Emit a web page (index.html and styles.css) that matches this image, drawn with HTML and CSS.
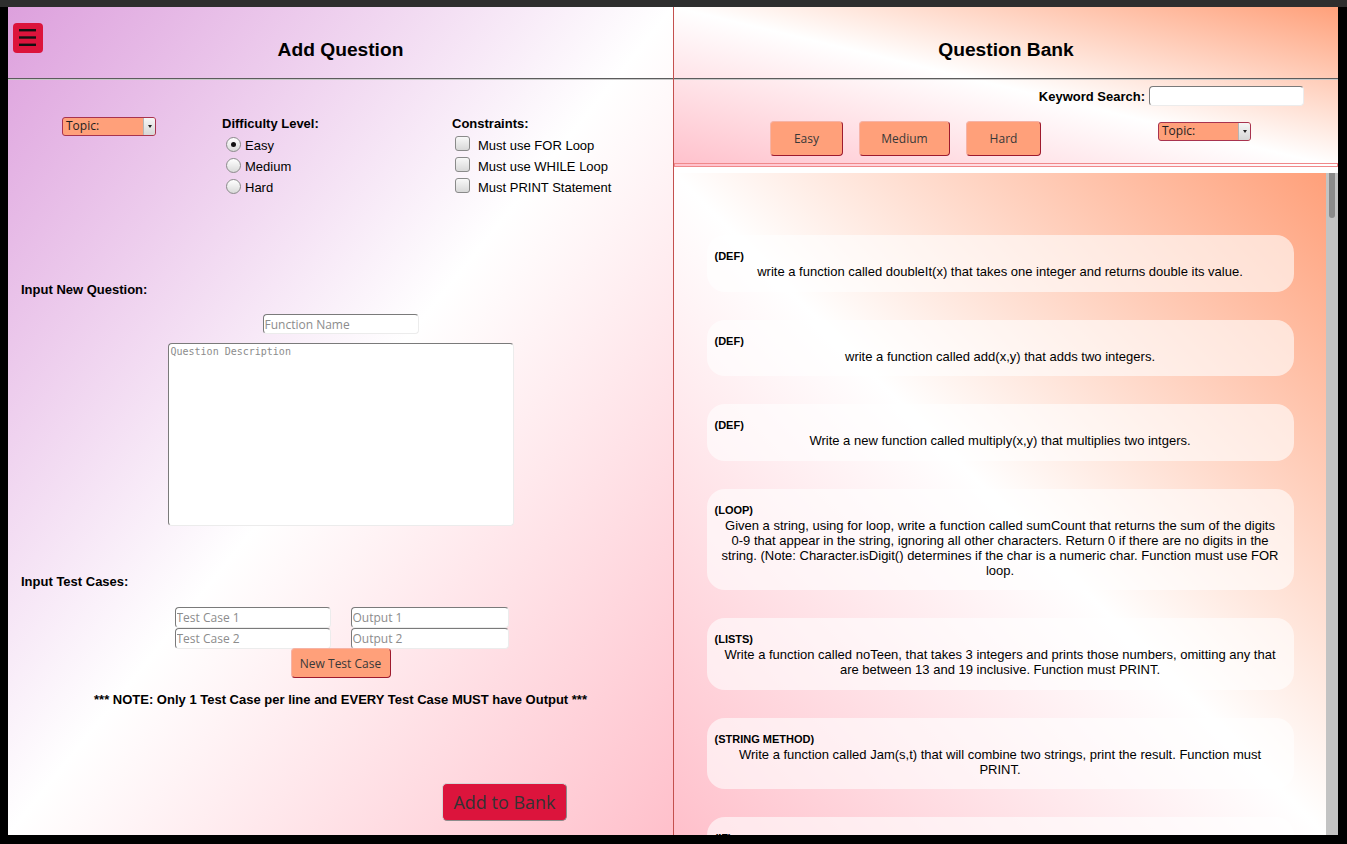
FILE: index.html
```html
<!DOCTYPE html>
<html lang="en">
<head>
<meta charset="utf-8">
<title>Question Bank</title>
<link rel="stylesheet" href="styles.css">
</head>
<body>
<div class="titlebar"></div>
<div class="app">
  <section class="panel panel-add">
    <div class="menu-btn" role="button" aria-label="Menu">
      <svg width="30" height="30" viewBox="0 0 30 30">
        <rect x="6" y="6" width="17" height="2.4" fill="#111"/>
        <rect x="6" y="13.3" width="17" height="2.4" fill="#111"/>
        <rect x="6" y="20.6" width="17" height="2.4" fill="#111"/>
      </svg>
    </div>
    <header class="panel-head"><h2>Add Question</h2></header>
    <div class="add-body">
      <div class="opts">
        <div class="opt-topic">
          <div class="select"><span class="select-text">Topic:</span><span class="select-arrow"></span></div>
        </div>
        <div class="opt-diff">
          <div class="opt-title">Difficulty Level:</div>
          <div class="opt-list">
            <div class="opt-row"><span class="radio checked"></span>Easy</div>
            <div class="opt-row"><span class="radio"></span>Medium</div>
            <div class="opt-row"><span class="radio"></span>Hard</div>
          </div>
        </div>
        <div class="opt-cons">
          <div class="opt-title">Constraints:</div>
          <div class="opt-list">
            <div class="opt-row"><span class="check"></span>Must use FOR Loop</div>
            <div class="opt-row"><span class="check"></span>Must use WHILE Loop</div>
            <div class="opt-row"><span class="check"></span>Must PRINT Statement</div>
          </div>
        </div>
      </div>
      <div class="sec-label sec-q">Input New Question:</div>
      <input class="field fname" placeholder="Function Name">
      <textarea class="field desc" placeholder="Question Description"></textarea>
      <div class="sec-label sec-t">Input Test Cases:</div>
      <div class="tc-grid">
        <input class="field tc" placeholder="Test Case 1">
        <input class="field tc" placeholder="Output 1">
        <input class="field tc" placeholder="Test Case 2">
        <input class="field tc" placeholder="Output 2">
      </div>
      <button class="btn-salmon btn-newtc">New Test Case</button>
      <p class="note">*** NOTE: Only 1 Test Case per line and EVERY Test Case MUST have Output ***</p>
      <button class="btn-add">Add to Bank</button>
    </div>
  </section>
  <div class="divider"></div>
  <section class="panel panel-bank">
    <div class="bank-top">
      <header class="panel-head"><h2>Question Bank</h2></header>
      <div class="bank-controls">
        <div class="kw-row"><span class="kw-label">Keyword Search:</span><input class="field kw"></div>
        <div class="filter-row">
          <button class="btn-salmon fbtn f-easy">Easy</button>
          <button class="btn-salmon fbtn f-med">Medium</button>
          <button class="btn-salmon fbtn f-hard">Hard</button>
          <div class="select select-bank"><span class="select-text">Topic:</span><span class="select-arrow"></span></div>
        </div>
        <div class="dbl-line"></div>
      </div>
    </div>
    <div class="bank-scroll">
      <div class="bank-list">
        <div class="card"><div class="tag">(DEF)</div><div class="qtext">write a function called doubleIt(x) that takes one integer and returns double its value.</div></div>
        <div class="card"><div class="tag">(DEF)</div><div class="qtext">write a function called add(x,y) that adds two integers.</div></div>
        <div class="card"><div class="tag">(DEF)</div><div class="qtext">Write a new function called multiply(x,y) that multiplies two intgers.</div></div>
        <div class="card"><div class="tag">(LOOP)</div><div class="qtext">Given a string, using for loop, write a function called sumCount that returns the sum of the digits 0-9 that appear in the string, ignoring all other characters. Return 0 if there are no digits in the string. (Note: Character.isDigit() determines if the char is a numeric char. Function must use FOR loop.</div></div>
        <div class="card"><div class="tag">(LISTS)</div><div class="qtext">Write a function called noTeen, that takes 3 integers and prints those numbers, omitting any that are between 13 and 19 inclusive. Function must PRINT.</div></div>
        <div class="card"><div class="tag">(STRING METHOD)</div><div class="qtext">Write a function called Jam(s,t) that will combine two strings, print the result. Function must PRINT.</div></div>
        <div class="card"><div class="tag">(IF)</div><div class="qtext">Write a function called isEven(x) that returns True if x is even.</div></div>
      </div>
      <div class="scrollbar"><div class="thumb"></div></div>
    </div>
  </section>
</div>
</body>
</html>
```
FILE: styles.css
```css
* { box-sizing: border-box; }
html, body { margin: 0; padding: 0; }
body {
  width: 1347px;
  height: 844px;
  overflow: hidden;
  background: #000;
  font-family: "Liberation Sans", Arial, sans-serif;
  font-size: 13px;
  color: #000;
}
.titlebar { height: 7px; background: #2e2e2e; }
.app { display: flex; height: 828px; margin: 0 9px 0 8px; }
.panel { position: relative; display: flex; flex-direction: column; }
.panel-add {
  width: 665px;
  background: linear-gradient(to bottom right, #dda0dd, #ffffff, #ffc0cb);
}
.divider { width: 1px; background: #c4504e; flex: none; }
.panel-bank { width: 664px; }

.menu-btn {
  position: absolute;
  left: 5px;
  top: 16px;
  width: 30px;
  height: 30px;
  border-radius: 4px;
  background: #dc143c;
}
.menu-btn svg { display: block; }

.panel-head {
  height: 72px;
  flex: none;
  display: flex;
  justify-content: center;
  padding-top: 32px;
  border-bottom: 1px solid #5c5c5c;
}
.panel-head h2 { margin: 0; font-size: 19.2px; line-height: 22px; font-weight: bold; }

/* ---------- Add question ---------- */
.add-body {
  flex: 1;
  display: flex;
  flex-direction: column;
  border-top: 1px solid #c8c8c8;
}
.opts { display: flex; margin-top: 36px; padding-left: 54px; }
.opt-topic { width: 160px; }
.opt-diff { width: 230px; }
.opt-cons { flex: 1; }
.opt-title { font-weight: bold; line-height: 15px; }
.opt-list { margin-top: 4px; }
.opt-row { display: flex; align-items: center; height: 21px; line-height: 15px; }
.radio {
  flex: none;
  position: relative;
  width: 15px;
  height: 15px;
  margin: -2px 4px 0 4px;
  border: 1px solid #8a8a8a;
  border-radius: 50%;
  background: linear-gradient(#ffffff, #d9d9d9);
}
.radio.checked::after {
  content: "";
  position: absolute;
  left: 4px;
  top: 4px;
  width: 5px;
  height: 5px;
  border-radius: 50%;
  background: #111;
}
.check {
  flex: none;
  width: 15px;
  height: 15px;
  margin: -5px 8px 0 3px;
  border: 1px solid #8a8a8a;
  border-radius: 3px;
  background: linear-gradient(#f8f8f8, #d8d8d8);
}

.select {
  display: flex;
  width: 94px;
  height: 19px;
  margin-top: 1px;
  border: 1px solid #a8334f;
  border-radius: 3px;
  background: #ffa07a;
  overflow: hidden;
  font-family: "Open Sans", sans-serif;
  font-size: 12px;
  color: #1e1e1e;
}
.select-text { flex: 1; padding-left: 3px; line-height: 16px; }
.select-arrow {
  width: 12px;
  display: flex;
  align-items: center;
  justify-content: center;
  border-left: 1px solid #b5b5b5;
  background: linear-gradient(#f6f6f6, #d6d6d6);
}
.select-arrow::after {
  content: "";
  border-top: 3px solid #222;
  border-left: 2.5px solid transparent;
  border-right: 2.5px solid transparent;
}

.sec-label { font-weight: bold; line-height: 15px; padding-left: 13px; }
.sec-q { margin-top: 84px; }
.sec-t { margin-top: 48px; }

.field {
  background: #fff;
  border: 1px solid;
  border-color: #7a7a7a #ececec #ececec #7a7a7a;
  border-radius: 4px;
  font-family: "Open Sans", sans-serif;
  font-size: 12px;
  color: #333;
  padding: 0 1px;
  outline: none;
  margin: 0;
}
.field::placeholder { color: #8c8c8c; }
.fname { align-self: center; width: 156px; height: 20px; margin-top: 17px; }
.desc {
  align-self: center;
  width: 346px;
  height: 183px;
  margin-top: 9px;
  resize: none;
  padding: 2px;
  font-family: "DejaVu Sans Mono", monospace;
  font-size: 10px;
}
.tc-grid {
  display: grid;
  grid-template-columns: 156px 158px;
  grid-auto-rows: 21px;
  column-gap: 20px;
  justify-content: center;
  margin-top: 18px;
  padding-left: 2px;
}
.tc { width: 100%; height: 21px; }

.btn-salmon {
  background: #ffa07a;
  border: 1px solid;
  border-color: #f6b3a6 #9e1a2e #9e1a2e #f6b3a6;
  border-radius: 4px;
  font-family: "Open Sans", sans-serif;
  font-size: 12px;
  color: #383838;
  padding: 0;
  margin: 0;
}
.btn-newtc { align-self: center; width: 100px; height: 30px; margin-top: -1px; }
.note {
  margin: 14px 0 0;
  text-align: center;
  font-weight: bold;
  line-height: 15px;
}
.btn-add {
  align-self: flex-start;
  width: 125px;
  height: 38px;
  margin: 76px 0 0 434px;
  padding: 0;
  background: #dc143c;
  border: 1px solid;
  border-color: #d6d6d6 #8c8c8c #8c8c8c #d6d6d6;
  border-radius: 5px;
  font-family: "Open Sans", sans-serif;
  font-size: 18px;
  color: #333;
}

/* ---------- Question bank ---------- */
.bank-top {
  flex: none;
  background: linear-gradient(to top right, #ffc0cb, #ffffff, #ffa07a);
}
.bank-controls {
  border-top: 1px solid #c8c8c8;
  padding-top: 6px;
}
.kw-row {
  display: flex;
  justify-content: flex-end;
  align-items: center;
  gap: 4px;
  padding-right: 34px;
  height: 20px;
}
.kw-label { font-weight: bold; }
.kw { width: 155px; height: 20px; }
.filter-row {
  display: flex;
  align-items: flex-start;
  gap: 16px;
  margin-top: 15px;
  padding-left: 96px;
  height: 35px;
}
.fbtn { height: 35px; }
.f-easy { width: 73px; }
.f-med { width: 91px; }
.f-hard { width: 75px; }
.select-bank { width: 93px; margin-left: 101px; }
.dbl-line {
  margin-top: 7px;
  height: 4px;
  border: 1px solid #f0888a;
}

.bank-scroll {
  flex: 1;
  min-height: 0;
  display: flex;
  border-top: 6px solid #fff;
}
.bank-list {
  flex: 1;
  min-width: 0;
  overflow: hidden;
  display: flex;
  flex-direction: column;
  align-items: center;
  gap: 28px;
  padding-top: 62px;
  background: linear-gradient(to top right, #ffc0cb, #ffffff, #ffa07a);
}
.card {
  flex: none;
  width: 587px;
  padding: 13px 8px 12.5px;
  border-radius: 18px;
  background: rgba(255, 255, 255, 0.6);
}
.tag { font-weight: bold; font-size: 11px; line-height: 16px; }
.qtext { text-align: center; line-height: 15px; padding: 0 5px; }
.scrollbar { width: 12px; flex: none; background: #c3c3c3; }
.thumb {
  width: 6px;
  height: 45px;
  margin-left: 3px;
  border-radius: 0 0 3px 3px;
  background: #8a8a8a;
}
```
